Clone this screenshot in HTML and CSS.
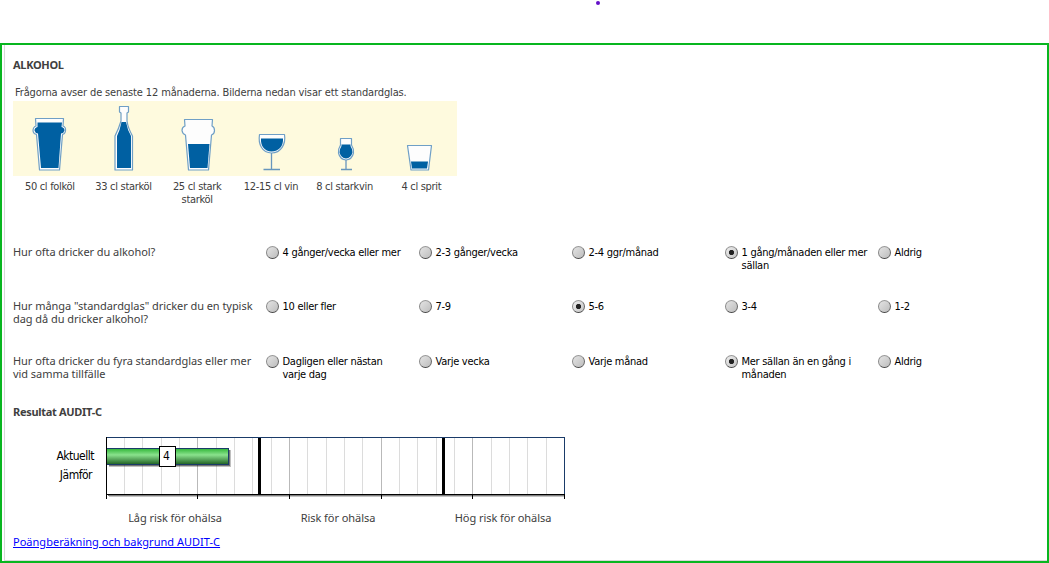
FILE: index.html
```html
<!DOCTYPE html>
<html lang="sv">
<head>
  <meta charset="UTF-8">
  <title>Alkohol</title>
  <link rel="stylesheet" href="styles.css">
</head>
<body>
  <div class="top"><span class="dot"></span></div>

  <div class="panel">
    <div class="panel-inner">
      <h1>ALKOHOL</h1>
      <p class="intro">Frågorna avser de senaste 12 månaderna. Bilderna nedan visar ett standardglas.</p>

      <svg class="glasses" width="444" height="75" viewBox="13 101 444 75" stroke-linejoin="round">
        <!-- glas och flaska -->
        <g stroke="#6f9fc6" stroke-width="1.2" fill="#fdfdfd">
          <path d="M35.500 118.500H63.500L63 126Q66 127 65.500 131Q65 134 62.500 134.500L59.500 170H39.500L36.500 134.500Q33.500 134 33 131Q33 127 36 126Z"/>
          <path d="M119.500 106.500H128.500V112L127 113V121Q128 128 132.500 136V170H115V136Q119 128 121 121V113L119.500 112Z"/>
          <path d="M184.500 119.500H212.500L212 126Q214.500 127 214.500 130.500Q214.500 134 211.500 135L208.500 170H188.500L185.500 135Q182.500 134 182 130.500Q182 127 185 126Z"/>
          <path d="M259.500 134.500H284.500C286 144 281 153 271.500 153C262 153 258 144 259.500 134.500Z"/>
          <path d="M340.500 138.500H351.500V145Q354 149 353.500 153Q352 159.500 346 160Q340 159.500 338.500 153Q338 149 340.500 145Z"/>
          <path d="M407.500 145.500H431.500L428.500 170H411Z"/>
        </g>
        <path d="M271.500 153V169M263.500 169.500H280M346 160V169M341 169.500H352" stroke="#6796bd" stroke-width="1.3" fill="none"/>
        <!-- innehåll -->
        <g fill="#0060a2">
          <path d="M37.500 122.500H62L61.500 127Q64.500 127.500 64.500 130.500Q64 133 61 133.500L58.500 168H41L38 133.500Q35 133 34.500 130.500Q34.500 127.500 37.500 127Z"/>
          <path d="M121.500 122H126Q127.500 130 131 136V168H117V136Q120 130 121.500 122Z"/>
          <path d="M188 144H209.500L207.500 168H190Z"/>
          <path d="M261 138.500H283C283.500 146 279 151.500 271.500 151.500C264.500 151.500 260.500 146 261 138.500Z"/>
          <path d="M341.500 144.500H350.500V146Q352.500 149 352.500 152.500Q351 158 346 158.500Q341 158 339.500 152.500Q339.500 149 341.500 146Z"/>
          <path d="M411 161.500H428L427 168.500H412Z"/>
        </g>
      </svg>

      <div class="captions">
        <span>50 cl folköl</span>
        <span>33 cl starköl</span>
        <span>25 cl stark<br>starköl</span>
        <span>12-15 cl vin</span>
        <span>8 cl starkvin</span>
        <span class="last">4 cl sprit</span>
      </div>

      <div class="question">
        <div class="label">Hur ofta dricker du alkohol?</div>
        <div class="option"><i class="radio"></i><span>4 gånger/vecka eller mer</span></div>
        <div class="option"><i class="radio"></i><span>2-3 gånger/vecka</span></div>
        <div class="option"><i class="radio"></i><span>2-4 ggr/månad</span></div>
        <div class="option"><i class="radio checked"></i><span>1 gång/månaden eller mer<br>sällan</span></div>
        <div class="option"><i class="radio"></i><span>Aldrig</span></div>
      </div>
      <div class="question">
        <div class="label">Hur många "standardglas" dricker du en typisk<br>dag då du dricker alkohol?</div>
        <div class="option"><i class="radio"></i><span>10 eller fler</span></div>
        <div class="option"><i class="radio"></i><span>7-9</span></div>
        <div class="option"><i class="radio checked"></i><span>5-6</span></div>
        <div class="option"><i class="radio"></i><span>3-4</span></div>
        <div class="option"><i class="radio"></i><span>1-2</span></div>
      </div>
      <div class="question">
        <div class="label">Hur ofta dricker du fyra standardglas eller mer<br>vid samma tillfälle</div>
        <div class="option"><i class="radio"></i><span>Dagligen eller nästan<br>varje dag</span></div>
        <div class="option"><i class="radio"></i><span>Varje vecka</span></div>
        <div class="option"><i class="radio"></i><span>Varje månad</span></div>
        <div class="option"><i class="radio checked"></i><span>Mer sällan än en gång i<br>månaden</span></div>
        <div class="option"><i class="radio"></i><span>Aldrig</span></div>
      </div>

      <h2>Resultat AUDIT-C</h2>
      <div class="chart">
        <div class="names">
          <span>Aktuellt</span>
          <span>Jämför</span>
        </div>
        <svg width="462" height="64" viewBox="106 436 462 64" shape-rendering="crispEdges">
          <defs>
            <linearGradient id="bar" x1="0" y1="0" x2="0" y2="1">
              <stop offset="0" stop-color="#2fb536"/>
              <stop offset=".4" stop-color="#8ae28d"/>
              <stop offset="1" stop-color="#1f5f22"/>
            </linearGradient>
          </defs>
          <path d="M124.500 438V494M142.500 438V494M161.500 438V494M179.500 438V494M216.500 438V494M234.500 438V494M252.500 438V494M271.500 438V494M307.500 438V494M326.500 438V494M344.500 438V494M362.500 438V494M399.500 438V494M417.500 438V494M436.500 438V494M454.500 438V494M491.500 438V494M509.500 438V494M527.500 438V494M546.500 438V494" stroke="#dcdcdc"/>
          <path d="M197.500 438V494M289.500 438V494M381.500 438V494M472.500 438V494" stroke="#b9b9b9"/>
          <path d="M107 437.500H564.500V494" stroke="#1a3b69" fill="none"/>
          <rect x="108" y="495" width="457" height="1" fill="#808080"/>
          <rect x="109" y="496" width="456" height="1" fill="#c4c4c4"/>
          <path d="M106.500 437V499M106 494.500H565M197.500 495V499M289.500 495V499M381.500 495V499M472.500 495V499M564.500 494V499" stroke="#000"/>
          <rect x="258" y="438" width="3" height="57"/>
          <rect x="442" y="438" width="3" height="57"/>
          <rect x="109" y="450" width="122" height="17" fill="#000" opacity=".25"/>
          <rect x="109" y="450" width="121" height="16" fill="#000" opacity=".4"/>
          <rect x="106.500" y="448.500" width="122" height="16" fill="url(#bar)" stroke="#1a3b69"/>
          <path d="M106.500 447V467" stroke="#000"/>
          <rect x="159.500" y="446.500" width="16" height="20" fill="#fff" stroke="#000"/>
          <text class="value" x="166.500" y="460" text-anchor="middle">4</text>
        </svg>
      </div>
      <div class="risks">
        <span>Låg risk för ohälsa</span>
        <span>Risk för ohälsa</span>
        <span>Hög risk för ohälsa</span>
      </div>
      <a class="link" href="#">Poängberäkning och bakgrund AUDIT-C</a>
    </div>
  </div>
</body>
</html>
```
FILE: styles.css
```css
* {
  box-sizing: border-box;
}
body {
  margin: 0;
  background: #fff;
  color: #404040;
  font: 11px/13px "DejaVu Sans Condensed", Tahoma, sans-serif;
  white-space: nowrap;
}
.top {
  height: 43px;
  padding: 1px 0 0 596px;
}
.dot {
  display: block;
  width: 4px;
  height: 4px;
  border-radius: 50%;
  background: #6410c8;
}
.panel {
  height: 520px;
  padding-left: 2px;
  border: 2px solid #08b61f;
}
.panel-inner {
  height: 516px;
  padding: 13px 0 0 8px;
  border-left: 1px solid #d8d8d8;
  border-bottom: 1px solid #d8d8d8;
}
h1, h2 {
  margin: 0;
  font: bold 11px/13px "Noto Sans", sans-serif;
  letter-spacing: -0.3px;
}
.intro {
  margin: 15px 0 2px 2px;
  letter-spacing: -0.14px;
}
.glasses {
  display: block;
  background: #fefade;
}
.captions {
  display: flex;
  height: 70px;
  padding-top: 4px;
  text-align: center;
  letter-spacing: -0.3px;
}
.captions span {
  width: 73.700px;
}
.captions .last {
  width: 80px;
}
.question {
  display: grid;
  grid-template-columns: 253px repeat(5, 153px);
  height: 54.400px;
}
.label, .risks, .link {
  font-family: "Noto Sans", sans-serif;
  letter-spacing: -0.05px;
}
.label {
  margin-top: -1px;
}
.option {
  display: flex;
  align-items: flex-start;
  gap: 3.500px;
  color: #000;
  letter-spacing: -0.28px;
}
.radio {
  width: 13px;
  height: 13px;
  border: 1px solid #777;
  border-color: #999 #666 #444 #888;
  border-radius: 50%;
  background: linear-gradient(135deg, #e4e4e4, #bdbdbd);
}
.radio.checked {
  background: radial-gradient(circle, #222 0 2.200px, transparent 3px), linear-gradient(135deg, #eee, #c4c4c4);
}
h2 {
  margin-top: -4px;
}
.chart {
  display: flex;
  height: 64px;
  margin-top: 18px;
}
.names {
  display: flex;
  flex-direction: column;
  gap: 6px;
  width: 93px;
  padding: 14px 12px 0 0;
  text-align: right;
  color: #000;
  font-size: 12px;
  letter-spacing: -0.5px;
}
.names span:last-child {
  padding-right: 2px;
}
.value {
  font-size: 12px;
  fill: #000;
}
.risks {
  display: flex;
  margin-top: 11px;
  padding-left: 93px;
  text-align: center;
}
.risks span {
  width: 138px;
}
.risks span:nth-child(2) {
  width: 188px;
}
.risks span:nth-child(3) {
  width: 142px;
}
.link {
  display: block;
  width: max-content;
  margin-top: 11px;
  color: #00f;
  letter-spacing: 0.02px;
}
```
